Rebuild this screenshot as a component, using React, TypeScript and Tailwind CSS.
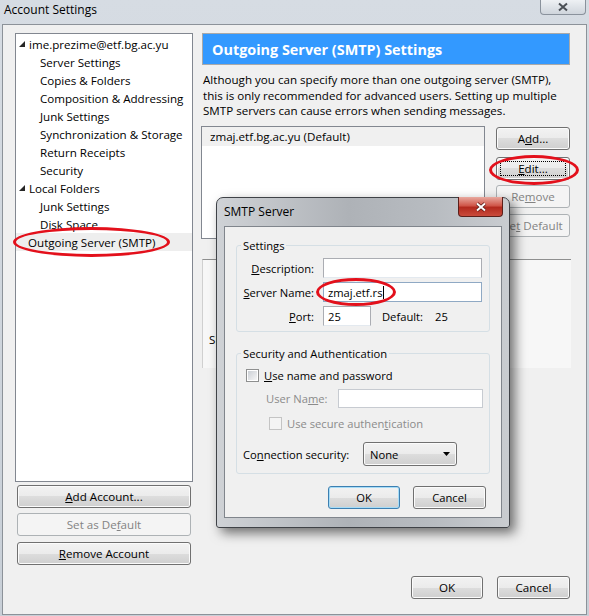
import React from 'react';

type BtnProps = {
  children: React.ReactNode;
  className?: string;
  disabled?: boolean;
  focused?: boolean;
  isDefault?: boolean;
};

function Btn({ children, className = '', disabled, focused, isDefault }: BtnProps) {
  if (disabled) {
    return (
      <div className={`flex h-[23px] items-center justify-center rounded-[3px] border border-[#adb2b5] bg-[#f4f4f4] text-[#838383] ${className}`}>
        {children}
      </div>
    );
  }
  return (
    <div
      className={`relative flex h-[23px] items-center justify-center rounded-[3px] border bg-[linear-gradient(to_bottom,#f2f2f2_0%,#ebebeb_50%,#dddddd_50%,#cfcfcf_100%)] ${
        isDefault
          ? 'border-[#3c7fb1] shadow-[inset_0_0_0_1px_#a6dcf7]'
          : 'border-[#707070] shadow-[inset_0_0_0_1px_#fbfbfb]'
      } ${className}`}
    >
      {focused && <div className="absolute inset-[3px] border border-dotted border-black" />}
      {children}
    </div>
  );
}

function Checkbox({ disabled }: { disabled?: boolean }) {
  return (
    <div
      className={`flex h-[13px] w-[13px] shrink-0 items-center justify-center border ${
        disabled ? 'border-[#c4c4c4] bg-[#f4f4f4]' : 'border-[#8e8f8f] bg-white'
      }`}
    >
      <div
        className={`h-[9px] w-[9px] ${
          disabled ? 'bg-[#f4f4f4]' : 'bg-gradient-to-br from-[#cbcfd5] to-[#f6f6f6]'
        }`}
      />
    </div>
  );
}

function Triangle() {
  return (
    <svg width="6" height="6" viewBox="0 0 6 6" className="shrink-0">
      <path d="M6 0 L6 6 L0 6 Z" fill="#262626" />
    </svg>
  );
}

function CloseX({ dark }: { dark?: boolean }) {
  return (
    <svg width="12" height="10" viewBox="0 0 12 10">
      {dark ? (
        <path d="M2 1.5 L10 8.5 M10 1.5 L2 8.5" stroke="#4a4f55" strokeWidth="2" fill="none" />
      ) : (
        <>
          <path d="M2 1.5 L10 8.5 M10 1.5 L2 8.5" stroke="#5a1a14" strokeWidth="3.6" fill="none" />
          <path d="M2 1.5 L10 8.5 M10 1.5 L2 8.5" stroke="#ffffff" strokeWidth="2" fill="none" />
        </>
      )}
    </svg>
  );
}

const treeItems: { label: string; level: 0 | 1 | 2 }[] = [
  { label: 'ime.prezime@etf.bg.ac.yu', level: 0 },
  { label: 'Server Settings', level: 1 },
  { label: 'Copies & Folders', level: 1 },
  { label: 'Composition & Addressing', level: 1 },
  { label: 'Junk Settings', level: 1 },
  { label: 'Synchronization & Storage', level: 1 },
  { label: 'Return Receipts', level: 1 },
  { label: 'Security', level: 1 },
  { label: 'Local Folders', level: 0 },
  { label: 'Junk Settings', level: 1 },
  { label: 'Disk Space', level: 1 },
  { label: 'Outgoing Server (SMTP)', level: 2 },
];

export default function App() {
  return (
    <div className="relative h-[616px] w-[589px] overflow-hidden bg-gradient-to-b from-[#d6dce3] to-[#c8cfd7] font-['Open_Sans',sans-serif] text-[11.6px] leading-[15px] text-black">
      {/* naslovna traka */}
      <div className="flex h-[24px] items-start justify-between">
        <div className="pl-[4px] pt-[1px] text-[12px] leading-[18px]">Account Settings</div>
        <div className="mr-[3px] flex h-[15px] w-[46px] items-center justify-center rounded-b-[4px] border border-t-0 border-[#8a929c] bg-gradient-to-b from-[#eef1f4] to-[#cfd5dc]">
          <CloseX dark />
        </div>
      </div>

      {/* telo prozora */}
      <div className="mx-[2px] flex h-[591px] border border-[#8c9299] bg-[#f0f0f0] pb-[15px] pl-[12px] pr-[15px] pt-[8px]">
        {/* levo: stablo naloga */}
        <div className="flex w-[178px] flex-col">
          <div className="h-[449px] border border-[#828790] bg-white pt-[1px]">
            {treeItems.map((item, i) => (
              <div
                key={i}
                className={`flex h-[18px] items-center whitespace-nowrap ${
                  item.level === 0 ? 'gap-[4px] pl-[3px]' : item.level === 1 ? 'pl-[24px]' : 'bg-[#eeeeee] pl-[12px]'
                }`}
              >
                {item.level === 0 && <Triangle />}
                {item.label}
              </div>
            ))}
          </div>
          <Btn className="mx-[2px] mt-[3px]">
            <span>
              <span className="underline">A</span>dd Account...
            </span>
          </Btn>
          <Btn className="mx-[2px] mt-[5px]" disabled>
            <span>
              Set as De<span className="underline">f</span>ault
            </span>
          </Btn>
          <Btn className="mx-[2px] mt-[6px]">
            <span>
              <span className="underline">R</span>emove Account
            </span>
          </Btn>
        </div>

        {/* desno: SMTP podešavanja */}
        <div className="ml-[8px] flex w-[370px] flex-col">
          <div className="mx-[1px] flex h-[32px] items-center border border-[#a9a9a9] bg-[#3399ff] pl-[9px] text-[14.4px] font-bold text-white">
            Outgoing Server (SMTP) Settings
          </div>
          <div className="mt-[7px] whitespace-nowrap px-[2px] leading-[15.5px]">
            Although you can specify more than one outgoing server (SMTP),
            <br />
            this is only recommended for advanced users. Setting up multiple
            <br />
            SMTP servers can cause errors when sending messages.
          </div>
          <div className="mt-[7px] flex">
            <div className="h-[113px] w-[284px] border border-[#828790] bg-white">
              <div className="flex h-[19px] items-center bg-[#f0f0f0] pl-[8px]">zmaj.etf.bg.ac.yu (Default)</div>
            </div>
            <div className="ml-[11px] flex w-[74px] flex-col pt-[1px]">
              <Btn>
                <span>
                  A<span className="underline">d</span>d...
                </span>
              </Btn>
              <Btn className="mt-[7px]" focused>
                <span>
                  <span className="underline">E</span>dit...
                </span>
              </Btn>
              <Btn className="mt-[5px]" disabled>
                <span>
                  Re<span className="underline">m</span>ove
                </span>
              </Btn>
              <Btn className="mt-[6px]" disabled>
                <span>
                  Se<span className="underline">t</span> Default
                </span>
              </Btn>
            </div>
          </div>
          <div className="ml-[1px] mt-[20px] h-[109px] border-l border-t border-l-[#d0d0d0] border-t-[#8e8f8f] bg-[#f7f7f7] pl-[6px] pt-[72px]">
            SMTP
          </div>
          <div className="mr-[1px] mt-auto flex justify-end gap-[14px]">
            <Btn className="w-[72px]">OK</Btn>
            <Btn className="w-[73px]">Cancel</Btn>
          </div>
        </div>
      </div>

      {/* dijalog SMTP Server */}
      <div className="absolute left-[216px] top-[197px] flex h-[331px] w-[294px] flex-col rounded-b-[3px] rounded-t-[7px] border border-[#3f4247] bg-[linear-gradient(to_right,#cfd2d6_0%,#aeb2b7_45%,#b8bcc1_75%,#c9ccd0_100%)] text-[11.2px] shadow-[5px_5px_12px_rgba(0,0,0,0.55)]">
        <div className="flex h-[28px] items-start justify-between">
          <div className="pl-[7px] pt-[6px] text-[12px] leading-[16px]">SMTP Server</div>
          <div className="-mt-[1px] mr-[6px] flex h-[20px] w-[45px] items-center justify-center rounded-b-[4px] border border-t-0 border-[#5b1f1a] bg-[linear-gradient(to_bottom,#e8a99f_0%,#d0574a_45%,#b32a1e_55%,#c94b3c_100%)]">
            <CloseX />
          </div>
        </div>
        <div className="mx-[7px] flex h-[292px] flex-col border border-[#80858c] bg-[#f0f0f0] px-[11px] pt-[11px]">
          <fieldset className="rounded-[3px] border border-[#d5dfe5] px-[0px] pb-[5px]">
            <legend className="ml-[4px] px-[2px] leading-[15px]">Settings</legend>
            <div className="mt-[5px] flex flex-col gap-[4px]">
              <div className="flex h-[20px] items-center">
                <div className="w-[77px] text-right">
                  <span className="underline">D</span>escription:
                </div>
                <div className="ml-[9px] h-[20px] w-[159px] border border-[#abadb3] border-b-[#e3e9ef] bg-white" />
              </div>
              <div className="flex h-[20px] items-center">
                <div className="w-[77px] whitespace-nowrap text-right">
                  <span className="underline">S</span>erver Name:
                </div>
                <div className="ml-[9px] flex h-[20px] w-[159px] items-center border border-[#8fa9c4] bg-white pl-[4px]">
                  zmaj.etf.rs<span className="ml-[1px] h-[13px] w-[1px] bg-black" />
                </div>
              </div>
              <div className="flex h-[20px] items-center">
                <div className="w-[77px] text-right">
                  <span className="underline">P</span>ort:
                </div>
                <div className="ml-[9px] flex h-[20px] w-[48px] items-center border border-[#abadb3] border-b-[#e3e9ef] bg-white pl-[4px]">
                  25
                </div>
                <div className="ml-[11px]">Default:</div>
                <div className="ml-[12px]">25</div>
              </div>
            </div>
          </fieldset>

          <fieldset className="mt-[14px] rounded-[3px] border border-[#d5dfe5] pb-[7px] pr-[6px]">
            <legend className="ml-[4px] px-[2px] leading-[15px]">Security and Authentication</legend>
            <div className="mt-[7px] flex h-[14px] items-center gap-[5px] pl-[9px]">
              <Checkbox />
              <span>
                <span className="underline">U</span>se name and password
              </span>
            </div>
            <div className="mt-[7px] flex h-[19px] items-center pl-[29px]">
              <span className="text-[#8b8b8b]">
                User Na<span className="underline">m</span>e:
              </span>
              <div className="ml-auto h-[19px] w-[145px] border border-[#c7cbd1] bg-white" />
            </div>
            <div className="mt-[8px] flex h-[14px] items-center gap-[5px] pl-[32px]">
              <Checkbox disabled />
              <span className="text-[#8b8b8b]">
                Use secure authen<span className="underline">t</span>ication
              </span>
            </div>
            <div className="mt-[12px] flex h-[24px] items-center pl-[6px]">
              <span className="whitespace-nowrap">
                Co<span className="underline">n</span>nection security:
              </span>
              <div className="ml-auto mr-[26px] flex h-[24px] w-[94px] items-center justify-between rounded-[3px] border border-[#707070] bg-[linear-gradient(to_bottom,#f2f2f2_0%,#ebebeb_50%,#dddddd_50%,#cfcfcf_100%)] pl-[6px] pr-[6px] shadow-[inset_0_0_0_1px_#fbfbfb]">
                <span>None</span>
                <svg width="7" height="4" viewBox="0 0 7 4">
                  <path d="M0 0 L7 0 L3.5 4 Z" fill="#000" />
                </svg>
              </div>
            </div>
          </fieldset>

          <div className="mr-[4px] mt-[12px] flex justify-end gap-[13px]">
            <Btn className="w-[72px]" isDefault>
              OK
            </Btn>
            <Btn className="w-[73px]">Cancel</Btn>
          </div>
        </div>
      </div>

      {/* crvene elipse */}
      <div className="absolute left-[13px] top-[227px] h-[30px] w-[157px] rounded-[50%] border-[3px] border-[#e3101b]" />
      <div className="absolute left-[489px] top-[155px] h-[30px] w-[90px] rounded-[50%] border-[3px] border-[#e3101b]" />
      <div className="absolute left-[316px] top-[278px] h-[28px] w-[80px] rounded-[50%] border-[3px] border-[#e3101b]" />
    </div>
  );
}
